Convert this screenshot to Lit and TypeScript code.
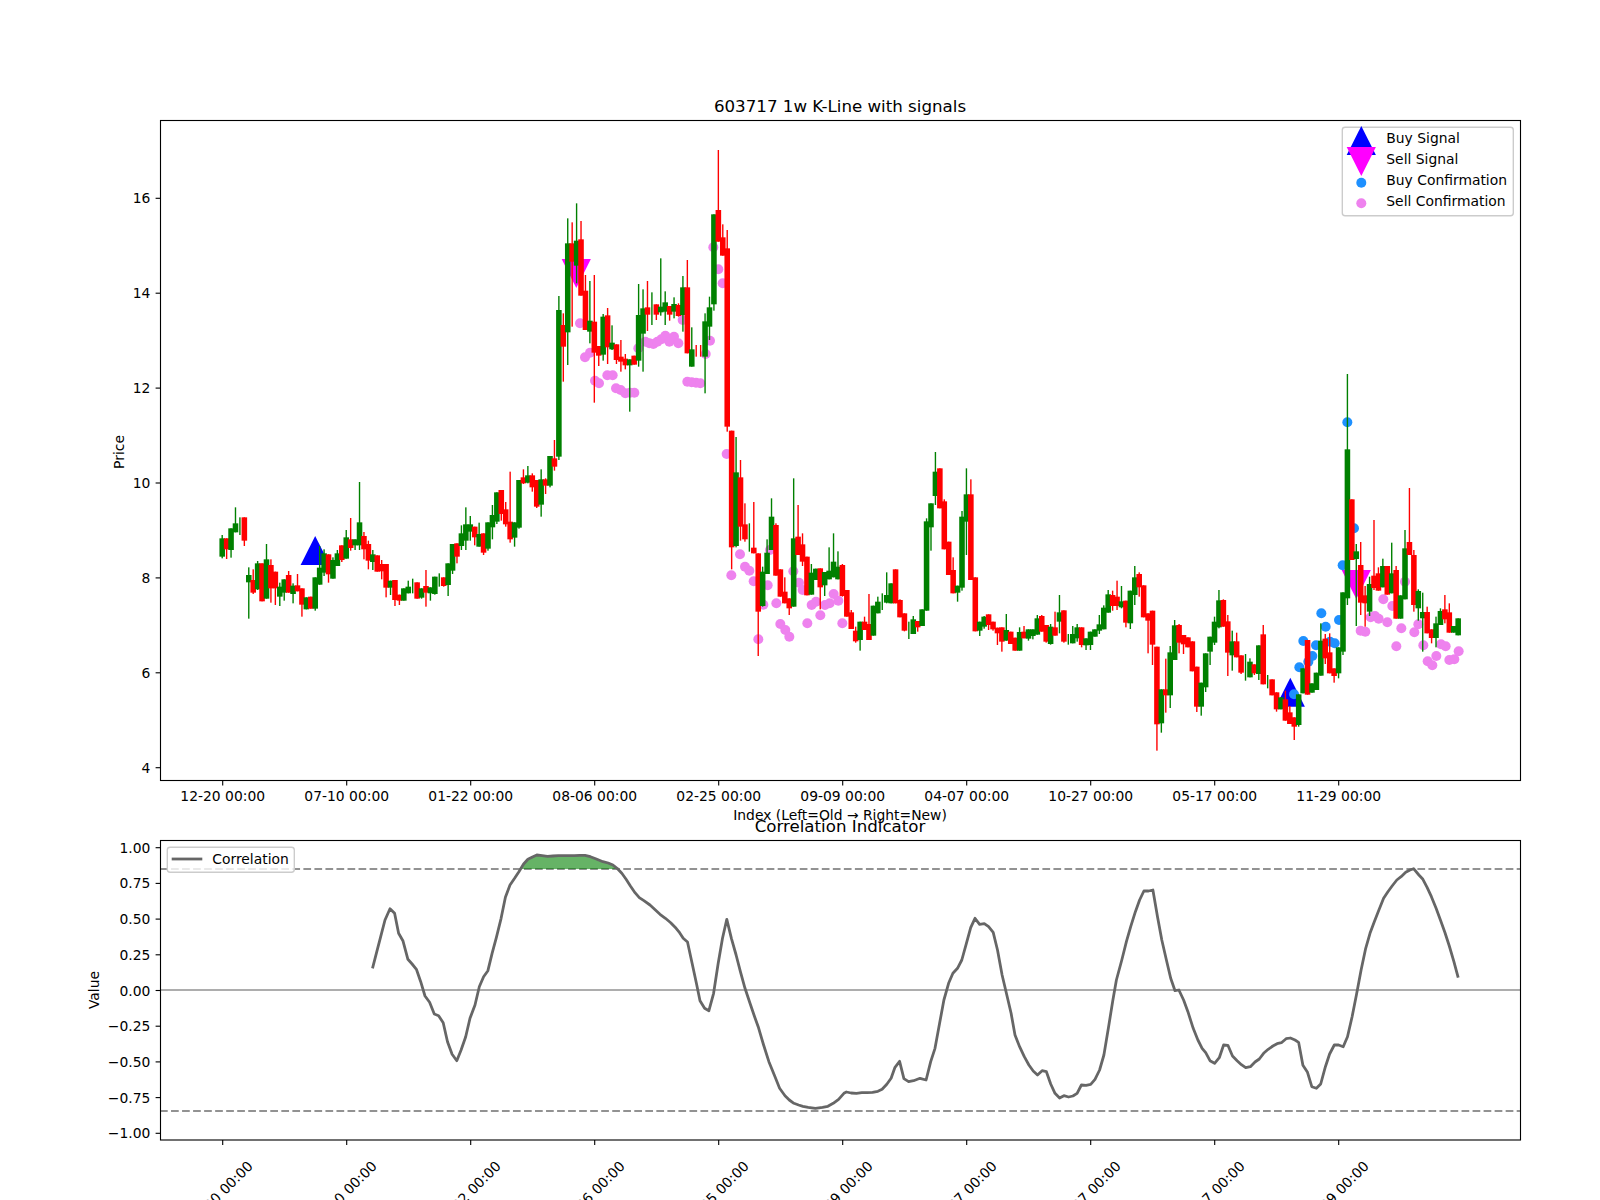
import { css, html, svg, LitElement } from 'lit';
import { customElement } from 'lit/decorators.js';

// candle rows: [colour 0=green 1=red, wickTop, bodyTop, bodyBottom, wickBottom]
// y values are read off 3x crops, so each block keeps its own page offset
type Row = [number, number, number, number, number];

const block = (y0: number, rows: Row[]) =>
  rows.map(([c, wt, bt, bb, wb]) => ({
    up: c === 0,
    wt: y0 + wt / 3,
    bt: y0 + bt / 3,
    bb: y0 + bb / 3,
    wb: y0 + wb / 3,
  }));

const CANDLES = [
  ...block(480, [
    [0,165,175,230,235],[1,175,175,208,237],[0,145,145,210,233],[0,82,130,157,157],[0,112,112,112,165],
    [1,112,112,182,198],[0,262,285,307,416],[1,268,300,338,342],[0,243,250,328,330],[1,250,250,364,364],
    [0,192,238,356,356],[1,238,255,325,368],[1,275,275,325,375],[0,308,320,350,378],[0,298,298,338,362],
    [1,273,285,338,338],[0,310,317,342,370],[1,282,316,334,334],[1,325,325,374,410],[0,352,352,388,388],
    [1,350,350,386,386],[0,292,292,386,392],[0,198,263,314,314],[0,208,220,278,288],[1,223,223,283,308],
    [0,232,240,296,296],[0,210,220,258,258],[1,196,196,240,246],[0,150,172,236,236],[1,114,178,204,212],
    [0,178,178,196,210],[0,6,127,196,210],[1,156,168,208,238],[1,182,192,242,268],[0,210,223,246,270],
    [1,226,226,275,275],[1,240,252,274,298],[1,252,252,323,352],[0,302,302,323,345],[1,300,300,360,378],
    [1,344,344,362,375],[0,325,325,362,362],[0,302,320,340,340],[0,296,296,296,340],[1,307,307,356,356],
    [0,325,325,353,356],[1,270,318,338,380],[0,322,322,340,362],[0,290,290,342,344],[0,280,280,280,320],
    [1,292,292,318,320],[0,250,250,315,348],[0,192,192,272,282],[1,190,190,230,250],[0,136,160,198,210],
    [0,82,133,182,210],[0,108,133,155,182],[1,140,140,172,196],[0,128,162,200,200],[1,160,160,218,225],
    [0,127,127,206,212],[0,75,105,142,178],[0,37,37,125,132],
  ]),
  ...block(400, [
    [1,270,270,342,362],[1,306,328,373,380],[1,215,365,418,428],[0,367,367,413,440],[0,240,240,383,386],
    [1,208,232,250,252],[0,198,226,248,250],[1,220,226,262,275],[1,240,240,320,324],[0,208,238,314,350],
    [1,235,238,257,282],[0,168,168,257,262],[1,120,175,200,212],
  ]),
  ...block(130, [
    [0,498,540,980,990],[1,550,585,650,755],[0,265,340,607,705],[1,277,340,395,590],[0,220,332,407,460],
    [1,273,328,497,497],[1,435,482,600,600],[0,453,572,605,640],[1,435,575,668,818],[1,648,648,677,708],
    [0,552,560,674,692],[1,534,556,652,702],[0,586,638,658,660],[1,643,643,690,702],[1,630,680,695,725],
    [1,672,686,706,718],[0,688,688,706,845],[1,677,677,704,704],[0,462,555,692,710],[0,478,535,611,725],
    [1,453,532,554,603],[0,487,487,487,585],[1,523,523,554,570],[0,385,530,547,557],[0,484,517,545,585],
    [1,528,528,554,572],[0,502,522,545,565],[1,520,525,558,560],[0,438,472,555,605],[1,390,472,670,670],
    [0,592,658,710,710],[1,645,645,645,680],[1,645,645,645,680],[0,550,574,680,790],[0,500,532,590,630],
    [0,253,253,523,542],[1,60,240,335,335],[1,283,322,377,377],[1,300,355,890,905],
  ]),
  ...block(440, [
    [1,-28,-28,322,388],[0,-9,97,318,322],[1,60,112,260,302],[1,190,253,298,305],[0,250,250,250,335],
    [1,186,323,340,340],[1,340,340,515,648],[0,380,395,498,500],[0,298,338,402,402],[0,175,230,330,330],
    [1,250,255,407,407],[1,388,388,470,470],[1,412,455,490,490],[1,475,475,505,525],[0,115,295,500,500],
    [1,195,290,345,345],[1,280,313,365,378],[1,350,350,466,466],[0,372,398,464,464],[0,386,386,420,420],
    [1,385,385,442,508],[0,396,396,436,468],[0,322,392,418,418],[0,280,365,412,412],[0,334,380,418,418],
    [1,372,375,468,470],[1,450,450,530,530],[1,510,517,567,567],[1,560,572,604,608],[0,545,545,600,632],
    [1,530,545,570,570],[1,462,552,600,600],[0,497,497,587,587],[0,470,485,520,520],[0,460,460,460,510],
    [0,397,465,488,490],[0,430,430,490,490],[1,388,388,490,490],[1,478,480,532,532],[1,520,520,572,574],
    [0,545,545,545,597],[0,528,538,582,582],[1,543,543,562,575],[0,508,508,558,558],[0,235,244,512,512],
    [0,190,190,262,332],[0,36,95,168,195],[1,85,85,205,205],[1,178,184,328,328],[1,305,305,405,405],
    [1,352,390,460,460],[0,437,437,458,485],[0,213,230,443,452],[0,85,163,245,345],[1,118,163,420,420],
    [1,412,412,574,574],[0,545,545,572,588],[0,528,530,560,566],[1,523,523,555,570],[1,545,545,568,572],
    [1,563,563,580,615],
  ]),
  ...block(540, [
    [1,262,262,305,335],[0,222,270,302,302],[1,275,275,312,312],[1,293,293,332,332],[0,262,276,332,332],
    [1,258,275,295,295],[0,268,268,296,302],[0,268,268,288,298],[0,225,235,284,284],[1,225,228,275,275],
    [1,255,255,305,308],[0,252,260,312,314],[1,215,262,287,287],[0,165,217,245,280],[1,211,211,305,308],
    [0,282,282,282,314],[0,258,282,310,310],[0,252,262,295,305],[1,262,262,315,322],[0,295,295,316,330],
    [0,275,275,315,330],[0,268,268,290,290],[0,225,253,272,282],[0,196,203,268,268],[0,150,163,218,218],
    [1,152,165,198,212],[1,122,170,198,210],[0,138,184,202,205],[1,182,182,248,262],[0,152,152,250,267],
    [0,78,112,165,195],[1,97,102,142,170],[1,136,136,232,232],[1,220,220,242,340],[1,212,212,314,375],
    [1,320,320,553,632],[0,448,448,550,578],[1,356,448,466,518],[0,318,337,466,504],[0,240,256,360,360],
    [1,252,255,308,340],[1,285,285,313,342],[1,292,292,322,322],[1,304,304,394,394],[1,380,380,500,516],
    [0,428,428,500,527],[0,340,340,442,456],[0,290,290,335,375],[0,230,245,308,315],[0,150,181,262,265],
    [1,178,180,260,260],[1,225,244,338,408],[0,272,304,346,392],[1,278,304,352,352],[1,346,346,398,402],
    [0,342,342,342,422],[0,355,365,412,412],[1,373,373,400,405],[0,316,316,402,420],
  ]),
  ...block(360, [
    [1,795,823,973,973],[0,945,945,945,985],[1,958,958,1006,1006],[1,997,997,1048,1055],[0,1012,1012,1048,1048],
    [1,992,1018,1082,1082],[1,1038,1057,1092,1092],[1,1072,1072,1100,1140],[0,1003,1003,1095,1100],[0,925,925,1000,1000],
    [1,840,840,1004,1004],[0,970,970,998,998],[0,938,938,990,990],[0,790,842,947,947],[1,822,836,895,912],
    [1,820,877,940,940],[1,925,925,948,968],[0,862,862,940,955],[0,697,697,875,885],[0,42,268,715,735],
    [1,418,418,600,600],[0,552,574,597,798],[1,546,615,728,765],[1,678,706,730,800],[0,650,672,755,768],
    [1,480,647,684,690],[1,622,640,692,692],[0,596,618,682,682],[1,618,618,704,704],[0,548,640,700,700],
    [1,618,630,776,776],[0,706,706,776,776],[0,510,565,718,718],[1,384,546,585,585],[1,570,585,735,755],
    [0,688,693,745,782],[0,698,756,775,875],[1,740,756,820,820],[1,808,808,834,850],[0,770,790,834,862],
    [0,745,753,795,795],[1,705,748,778,790],[1,730,757,818,818],[0,798,798,818,818],[0,775,775,826,826],
  ]),
];

const crop = (x0: number, y0: number, pts: number[][], kx = 3) =>
  pts.map(([x, y]) => [x0 + x / kx, y0 + y / 3]);

const SELL_DOTS = [
  ...crop(500, 130, [
    [240,580],[255,682],[270,668],[285,752],[297,760],[322,736],[338,736],[348,775],[362,780],[376,790],
    [390,788],[403,788],[415,655],[436,635],[448,640],[460,642],[472,635],[484,628],[496,617],[508,635],
    [522,620],[535,640],[548,570],[562,755],[575,757],[588,758],[601,760],[617,672],[630,632],[640,352],
    [655,418],[668,460],[680,972],
  ]),
  ...crop(720, 440, [
    [60,343],[34,406],[75,380],[88,392],[101,424],[143,436],[130,494],[115,598],[169,490],[150,330],
    [181,552],[196,570],[208,590],[220,394],[237,428],[248,450],[262,550],[275,495],[288,485],[301,526],
    [315,495],[329,490],[341,462],[355,482],[367,550],
  ]),
  ...crop(1260, 360, [
    [302,812],[316,815],[332,772],[345,768],[356,776],[382,787],[370,718],[397,738],[424,805],[409,859],
    [435,665],[463,817],[475,793],[490,856],[503,904],[517,916],[529,888],[543,853],[557,859],[568,900],
    [583,898],[596,874],
  ]),
];

const BUY_DOTS = crop(1260, 360, [
  [262,187],[282,505],[248,616],[184,760],[197,800],[237,780],[130,843],[168,856],[210,845],[224,850],
  [157,888],[145,905],[118,922],[102,1003],
]);

const CORR = [
  ...crop(360, 840, [
    [35,385],[47,335],[58,290],[70,240],[84,206],[97,220],[108,280],[120,302],[134,358],[146,372],[158,388],
    [170,425],[182,468],[195,487],[208,522],[220,527],[233,548],[245,605],[258,643],[271,662],[283,630],
    [296,590],[308,535],[322,495],[334,440],[346,410],[358,392],[370,340],[382,292],[395,235],[407,172],
    [420,135],[433,115],[445,95],[458,72],[470,58],[483,51],[495,45],[510,47],[525,49],[540,48],[555,47],
    [570,47],[585,47],[600,47],[615,46],[630,46],[645,50],[660,56],[680,65],[695,69],[708,75],[720,85],
    [733,100],[745,118],[757,138],[770,158],[782,173],[795,182],[812,195],[825,208],[840,223],[855,235],
    [870,248],[885,265],[895,278],[905,295],[917,306],[930,370],[942,430],[952,482],[965,505],[977,512],
    [990,460],[1003,370],[1015,295],[1027,238],[1040,295],[1053,345],[1065,395],[1078,445],[1092,490],
    [1105,530],[1115,560],[1130,615],[1145,665],[1160,705],[1175,745],[1190,767],[1202,780],[1215,790],
    [1228,795],[1240,799],[1255,802],[1275,805],[1295,802],[1310,799],[1325,790],[1340,778],[1355,760],
    [1362,756],[1375,759],[1390,760],[1405,758],[1420,758],[1435,757],[1450,754],[1462,748],[1475,733],
    [1487,715],[1498,682],[1511,664],[1523,716],[1536,725],[1550,722],
  ], 2.8),
  ...crop(920, 840, [
    [0,715],[17,720],[30,665],[42,625],[55,550],[67,480],[80,430],[92,400],[105,385],[117,360],[130,310],
    [142,263],[154,235],[167,253],[180,251],[192,260],[205,277],[217,330],[230,405],[242,460],[255,520],
    [266,585],[279,620],[292,650],[305,675],[317,693],[329,705],[342,692],[354,695],[366,732],[378,760],
    [391,774],[403,767],[416,771],[428,768],[440,760],[452,735],[465,736],[478,733],[490,718],[503,690],
    [515,645],[528,560],[540,480],[550,420],[565,360],[578,305],[590,260],[603,215],[615,180],[627,153],
    [640,153],[652,150],[665,230],[677,300],[690,360],[702,415],[714,452],[725,450],[738,480],[750,515],
    [765,565],[778,600],[790,625],[800,638],[812,662],[825,670],[838,653],[850,615],[862,616],[875,648],
    [888,662],[900,674],[912,683],[925,680],[938,666],[950,657],[962,640],[975,628],[988,618],[1000,611],
    [1012,608],[1025,596],[1037,594],[1050,600],[1060,607],[1072,676],[1085,697],[1097,740],[1110,745],
    [1122,732],[1135,680],[1147,642],[1160,615],[1172,615],[1185,620],[1197,590],[1210,530],[1222,465],
    [1235,390],[1248,325],[1260,280],[1272,245],[1285,210],[1298,175],[1310,155],[1322,138],[1335,120],
    [1347,110],[1360,97],[1372,90],[1382,86],[1397,105],[1408,118],[1420,142],[1432,170],[1445,205],
    [1458,242],[1470,278],[1482,318],[1495,365],[1507,413],
  ], 2.8),
];

const HIGH_ZONE = crop(360, 840, [
  [453,87],[458,72],[470,58],[483,51],[495,45],[510,47],[525,49],[540,48],[555,47],[570,47],[585,47],
  [600,47],[615,46],[630,46],[645,50],[660,56],[680,65],[695,69],[708,75],[720,85],[722,87],
], 2.8);

const TICK_LABELS = ['12-20', '07-10', '01-22', '08-06', '02-25', '09-09', '04-07', '10-27', '05-17', '11-29'];
const PRICE_TICKS = [16, 14, 12, 10, 8, 6, 4];
const VALUE_TICKS = ['1.00', '0.75', '0.50', '0.25', '0.00', '−0.25', '−0.50', '−0.75', '−1.00'];

const candleX = (i: number) => 222.2 + 4.43 * i;
const tickX = (i: number) => 222.7 + 124 * i;
const priceY = (p: number) => 198.3 + (16 - p) * 47.45;
const valueY = (i: number) => 847.7 + i * 35.7;
const points = (pts: number[][]) => pts.map(p => p.map(n => n.toFixed(1)).join(',')).join(' ');

const upTri = (x: number, top: number, half = 14.6, h = 29) => `${x},${top} ${x + half},${top + h} ${x - half},${top + h}`;
const downTri = (x: number, top: number, half = 14.6, h = 29) => `${x - half},${top} ${x + half},${top} ${x},${top + h}`;

@customElement('app-root')
export class AppRoot extends LitElement {
  static styles = css`
    :host {
      display: block;
      width: 1600px;
      height: 1200px;
      background: #fff;
      overflow: hidden;
    }
    svg {
      display: block;
    }
    text {
      font-family: 'DejaVu Sans', sans-serif;
      font-size: 13.89px;
      fill: #000;
    }
    .title {
      font-size: 16.67px;
      text-anchor: middle;
    }
    .mid {
      text-anchor: middle;
    }
    .end {
      text-anchor: end;
    }
    .axis {
      stroke: #000;
      stroke-width: 1.11px;
      fill: none;
    }
    .legend {
      fill: #fff;
      fill-opacity: 0.8;
      stroke: #ccc;
      stroke-width: 1.39px;
    }
    .wick-up {
      fill: #008000;
    }
    .wick-down {
      fill: #ff0000;
    }
    .guide {
      stroke: #929292;
      stroke-width: 2.08px;
      stroke-dasharray: 7.7 3.33;
    }
    .zero {
      stroke: #adadad;
      stroke-width: 2.08px;
    }
    .corr {
      fill: none;
      stroke: #666;
      stroke-width: 2.78px;
      stroke-linejoin: round;
    }
    .zone {
      fill: #008000;
      fill-opacity: 0.6;
    }
  `;

  private renderCandles() {
    return CANDLES.map((c, i) => {
      const x = candleX(i);
      const cls = c.up ? 'wick-up' : 'wick-down';
      return svg`
        <rect class=${cls} x=${x - 0.7} y=${c.wt} width="1.39" height=${c.wb - c.wt}></rect>
        <rect class=${cls} x=${x - 2.78} y=${c.bt} width="5.56" height=${Math.max(c.bb - c.bt, 0)}></rect>`;
    });
  }

  private renderPriceChart() {
    return svg`
      <text class="title" x="840" y="112">603717 1w K-Line with signals</text>

      <polygon fill="#0000ff" points=${upTri(315.2, 536)}></polygon>
      <polygon fill="#0000ff" points=${upTri(1290.3, 677.7)}></polygon>
      <polygon fill="#ff00ff" points=${downTri(576.3, 259)}></polygon>
      <polygon fill="#ff00ff" points=${downTri(1356.3, 570)}></polygon>
      ${SELL_DOTS.map(([x, y]) => svg`<circle cx=${x} cy=${y} r="5" fill="#ee82ee"></circle>`)}
      ${BUY_DOTS.map(([x, y]) => svg`<circle cx=${x} cy=${y} r="5" fill="#1e90ff"></circle>`)}
      ${this.renderCandles()}

      <rect class="axis" x="160.5" y="120.5" width="1360" height="660"></rect>
      ${PRICE_TICKS.map(p => svg`
        <line class="axis" x1="155.6" x2="160.5" y1=${priceY(p)} y2=${priceY(p)}></line>
        <text class="end" x="150.3" y=${priceY(p) + 5}>${p}</text>`)}
      ${TICK_LABELS.map((t, i) => svg`
        <line class="axis" x1=${tickX(i)} x2=${tickX(i)} y1="780.5" y2="785.4"></line>
        <text class="mid" x=${tickX(i)} y="801">${t} 00:00</text>`)}
      <text class="mid" x="840" y="820">Index (Left=Old → Right=New)</text>
      <text class="mid" transform="translate(124 452) rotate(-90)">Price</text>

      <rect class="legend" x="1342.3" y="127.3" width="171" height="88.4" rx="2.8"></rect>
      <polygon fill="#0000ff" points=${upTri(1361.3, 126)}></polygon>
      <polygon fill="#ff00ff" points=${downTri(1361.3, 147)}></polygon>
      <circle cx="1361.3" cy="182.7" r="5" fill="#1e90ff"></circle>
      <circle cx="1361.3" cy="203.3" r="5" fill="#ee82ee"></circle>
      <text x="1386.3" y="143.3">Buy Signal</text>
      <text x="1386.3" y="164.3">Sell Signal</text>
      <text x="1386.3" y="185.3">Buy Confirmation</text>
      <text x="1386.3" y="206">Sell Confirmation</text>`;
  }

  private renderCorrelation() {
    return svg`
      <text class="title" x="840" y="832">Correlation Indicator</text>

      <line class="zero" x1="160" x2="1520" y1="990" y2="990"></line>
      <line class="guide" x1="160" x2="1520" y1="869" y2="869"></line>
      <line class="guide" x1="160" x2="1520" y1="1111" y2="1111"></line>
      <polygon class="zone" points=${points(HIGH_ZONE)}></polygon>
      <polyline class="corr" points=${points(CORR)}></polyline>

      <rect class="axis" x="160.5" y="840.5" width="1360" height="299.5"></rect>
      ${VALUE_TICKS.map((t, i) => svg`
        <line class="axis" x1="155.6" x2="160.5" y1=${valueY(i)} y2=${valueY(i)}></line>
        <text class="end" x="150.3" y=${valueY(i) + 5}>${t}</text>`)}
      ${TICK_LABELS.map((t, i) => svg`
        <line class="axis" x1=${tickX(i)} x2=${tickX(i)} y1="1140" y2="1145"></line>
        <text class="mid" transform="translate(${tickX(i) + 1} 1197) rotate(-45)">${t} 00:00</text>`)}
      <text class="mid" transform="translate(99 990) rotate(-90)">Value</text>

      <rect class="legend" x="167.3" y="847.3" width="127" height="25" rx="2.8"></rect>
      <line x1="171.7" x2="202.3" y1="859" y2="859" stroke="#666" stroke-width="2.78"></line>
      <text x="212.3" y="864">Correlation</text>`;
  }

  render() {
    return html`
      <svg width="1600" height="1200" viewBox="0 0 1600 1200">
        ${this.renderPriceChart()}
        ${this.renderCorrelation()}
      </svg>`;
  }
}
